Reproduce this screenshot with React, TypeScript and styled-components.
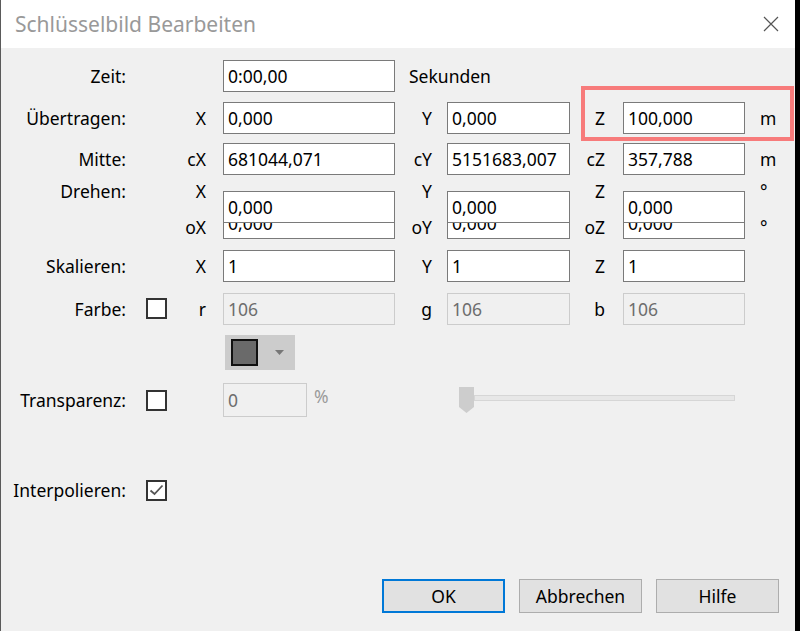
import React from 'react';
import styled, { createGlobalStyle } from 'styled-components';

const GlobalStyle = createGlobalStyle`
  html, body {
    margin: 0;
    padding: 0;
    background: #000;
  }
  body {
    font-family: 'Noto Sans', 'Open Sans', sans-serif;
    font-size: 17.5px;
    color: #000;
  }
`;

const Screen = styled.div`
  display: flex;
  width: 800px;
  height: 631px;
  background: #000;
`;

const Dialog = styled.div`
  width: 794px;
  display: flex;
  flex-direction: column;
  background: #f0f0f0;
  border-left: 1px solid #5a5a5a;
`;

const TitleBar = styled.div`
  height: 48px;
  flex-shrink: 0;
  background: #fff;
  display: flex;
  align-items: center;
  justify-content: space-between;
  padding: 0 16px 0 14px;
`;

const Title = styled.span`
  font-size: 21px;
  color: #999;
`;

const Body = styled.div`
  flex: 1;
  display: flex;
  flex-direction: column;
  padding: 12px 0 18px;
`;

const Row = styled.div<{ $gap?: number; $h?: number }>`
  position: relative;
  display: grid;
  grid-template-columns: 125px 20px 20px 57px 172px 52px 123px 53px 122px 1fr;
  align-items: center;
  height: ${p => p.$h ?? 32}px;
  margin-top: ${p => p.$gap ?? 0}px;
`;

const RotRows = styled(Row)`
  grid-template-rows: 24px 12px 24px;
  height: 60px;
`;

const Label = styled.span<{ $row?: string }>`
  grid-column: 1;
  grid-row: ${p => p.$row ?? 'auto'};
  text-align: right;
  white-space: nowrap;
`;

const Axis = styled.span<{ $col: number; $pad: number; $row?: string }>`
  grid-column: ${p => p.$col};
  grid-row: ${p => p.$row ?? 'auto'};
  text-align: right;
  padding-right: ${p => p.$pad}px;
`;

const Unit = styled.span<{ $row?: string }>`
  grid-column: 10;
  grid-row: ${p => p.$row ?? 'auto'};
  padding-left: 15px;
`;

const Note = styled.span`
  grid-column: 6 / 9;
  padding-left: 14px;
`;

const Field = styled.input<{ $col?: number; $disabled?: boolean }>`
  grid-column: ${p => p.$col ?? 'auto'};
  box-sizing: border-box;
  width: 100%;
  height: 32px;
  margin: 0;
  padding: 0 4px;
  font-family: inherit;
  font-size: 17.5px;
  color: ${p => (p.$disabled ? '#6d6d6d' : '#000')};
  background: ${p => (p.$disabled ? '#f0f0f0' : '#fff')};
  border: 1px solid ${p => (p.$disabled ? '#cccccc' : '#7a7a7a')};
  outline: none;
`;

const Stack = styled.div<{ $col: number }>`
  grid-column: ${p => p.$col};
  grid-row: 1 / 4;
  align-self: end;
  display: grid;
  height: 48px;

  & > * {
    grid-area: 1 / 1;
  }
  & > :first-child {
    align-self: end;
  }
  & > :last-child {
    align-self: start;
  }
`;

const Check = styled.span`
  grid-column: 3;
  box-sizing: border-box;
  width: 21px;
  height: 21px;
  border: 2px solid #333;
  background: #fff;
  display: flex;
  align-items: center;
  justify-content: center;
`;

const Highlight = styled.div`
  position: absolute;
  left: 580px;
  top: -16px;
  width: 213px;
  height: 55px;
  box-sizing: border-box;
  border: 4px solid #f77b7b;
  pointer-events: none;
`;

const ColorButton = styled.div`
  grid-column: 5;
  margin-left: 2px;
  width: 70px;
  height: 35px;
  background: #cccccc;
  display: flex;
  align-items: center;
  padding-left: 6px;
  box-sizing: border-box;
  gap: 17px;
`;

const Swatch = styled.span`
  width: 27px;
  height: 27px;
  box-sizing: border-box;
  border: 2px solid #111;
  background: #6a6a6a;
`;

const PercentCell = styled.div`
  grid-column: 5 / 7;
  display: flex;
  align-items: center;
  gap: 7px;

  & > input {
    width: 84px;
    height: 34px;
  }
`;

const Percent = styled.span`
  color: #9a9a9a;
  align-self: flex-start;
  margin-top: 1px;
`;

const Slider = styled.div`
  grid-column: 7 / 10;
  margin-left: 12px;
  display: flex;
  align-items: center;
  width: 276px;
  height: 26px;
`;

const Track = styled.div`
  flex: 1;
  height: 6px;
  margin-top: -4px;
  background: #e7e7e7;
  border: 1px solid #d6d6d6;
  box-sizing: border-box;
`;

const Buttons = styled.div`
  margin-top: auto;
  display: flex;
  justify-content: flex-end;
  gap: 14px;
  padding-right: 16px;
`;

const Button = styled.button<{ $default?: boolean }>`
  width: 123px;
  height: 34px;
  box-sizing: border-box;
  background: #e1e1e1;
  border: ${p => (p.$default ? '2px solid #0078d7' : '1px solid #adadad')};
  font-family: inherit;
  font-size: 17.5px;
  color: #000;
  padding: 0;
`;

const CloseIcon = () => (
  <svg width="16" height="16" viewBox="0 0 16 16">
    <path d="M1 1 L15 15 M15 1 L1 15" stroke="#555" strokeWidth="1.2" fill="none" />
  </svg>
);

const Tick = () => (
  <svg width="15" height="12" viewBox="0 0 15 12">
    <path d="M1.5 6.5 L5.5 10 L13.5 1.5" stroke="#555" strokeWidth="1.8" fill="none" />
  </svg>
);

const Thumb = () => (
  <svg width="15" height="26" viewBox="0 0 15 26">
    <path d="M0 0 H15 V20 L7.5 26 L0 20 Z" fill="#cdcdcd" />
  </svg>
);

export default function App() {
  return (
    <Screen>
      <GlobalStyle />
      <Dialog>
        <TitleBar>
          <Title>Schlüsselbild Bearbeiten</Title>
          <CloseIcon />
        </TitleBar>
        <Body>
          <Row>
            <Label>Zeit:</Label>
            <Field $col={5} readOnly value="0:00,00" />
            <Note>Sekunden</Note>
          </Row>

          <Row $gap={10}>
            <Label>Übertragen:</Label>
            <Axis $col={4} $pad={17}>X</Axis>
            <Field $col={5} readOnly value="0,000" />
            <Axis $col={6} $pad={15}>Y</Axis>
            <Field $col={7} readOnly value="0,000" />
            <Axis $col={8} $pad={18}>Z</Axis>
            <Field $col={9} readOnly value="100,000" />
            <Unit>m</Unit>
            <Highlight />
          </Row>

          <Row $gap={9}>
            <Label>Mitte:</Label>
            <Axis $col={4} $pad={17}>cX</Axis>
            <Field $col={5} readOnly value="681044,071" />
            <Axis $col={6} $pad={15}>cY</Axis>
            <Field $col={7} readOnly value="5151683,007" />
            <Axis $col={8} $pad={18}>cZ</Axis>
            <Field $col={9} readOnly value="357,788" />
            <Unit>m</Unit>
          </Row>

          <RotRows $gap={4}>
            <Label $row="1">Drehen:</Label>
            <Axis $col={4} $pad={17} $row="1">X</Axis>
            <Axis $col={4} $pad={17} $row="3">oX</Axis>
            <Stack $col={5}>
              <Field readOnly value="0,000" />
              <Field readOnly value="0,000" />
            </Stack>
            <Axis $col={6} $pad={15} $row="1">Y</Axis>
            <Axis $col={6} $pad={15} $row="3">oY</Axis>
            <Stack $col={7}>
              <Field readOnly value="0,000" />
              <Field readOnly value="0,000" />
            </Stack>
            <Axis $col={8} $pad={18} $row="1">Z</Axis>
            <Axis $col={8} $pad={18} $row="3">oZ</Axis>
            <Stack $col={9}>
              <Field readOnly value="0,000" />
              <Field readOnly value="0,000" />
            </Stack>
            <Unit $row="1">°</Unit>
            <Unit $row="3">°</Unit>
          </RotRows>

          <Row $gap={11}>
            <Label>Skalieren:</Label>
            <Axis $col={4} $pad={17}>X</Axis>
            <Field $col={5} readOnly value="1" />
            <Axis $col={6} $pad={15}>Y</Axis>
            <Field $col={7} readOnly value="1" />
            <Axis $col={8} $pad={18}>Z</Axis>
            <Field $col={9} readOnly value="1" />
          </Row>

          <Row $gap={10} $h={33}>
            <Label>Farbe:</Label>
            <Check />
            <Axis $col={4} $pad={17}>r</Axis>
            <Field $col={5} $disabled readOnly value="106" />
            <Axis $col={6} $pad={15}>g</Axis>
            <Field $col={7} $disabled readOnly value="106" />
            <Axis $col={8} $pad={18}>b</Axis>
            <Field $col={9} $disabled readOnly value="106" />
          </Row>

          <Row $gap={10} $h={35}>
            <ColorButton>
              <Swatch />
              <svg width="9" height="5" viewBox="0 0 9 5">
                <path d="M0 0 H9 L4.5 5 Z" fill="#777" />
              </svg>
            </ColorButton>
          </Row>

          <Row $gap={13} $h={34}>
            <Label>Transparenz:</Label>
            <Check />
            <PercentCell>
              <Field $disabled readOnly value="0" />
              <Percent>%</Percent>
            </PercentCell>
            <Slider>
              <Thumb />
              <Track />
            </Slider>
          </Row>

          <Row $gap={57}>
            <Label>Interpolieren:</Label>
            <Check>
              <Tick />
            </Check>
          </Row>

          <Buttons>
            <Button $default>OK</Button>
            <Button>Abbrechen</Button>
            <Button>Hilfe</Button>
          </Buttons>
        </Body>
      </Dialog>
    </Screen>
  );
}
